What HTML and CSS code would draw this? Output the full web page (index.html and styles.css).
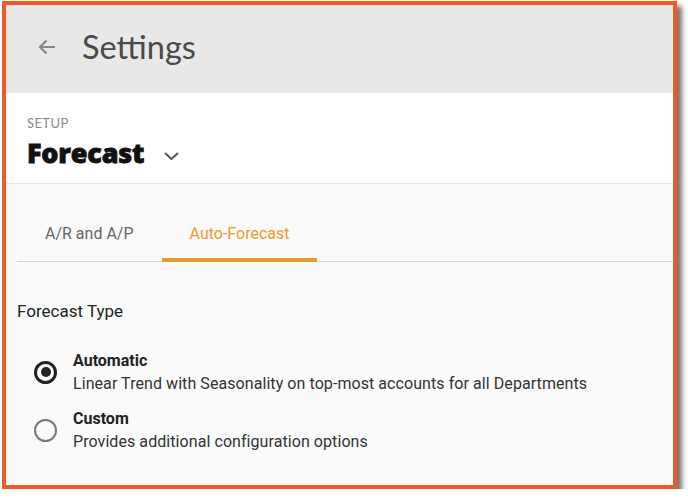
FILE: index.html
```html
<!DOCTYPE html>
<html lang="en">
<head>
    <meta charset="UTF-8">
    <title>Settings - Forecast</title>
    <link rel="stylesheet" href="styles.css">
</head>
<body>

<div class="frame">
    <header class="topbar">
        <svg class="back" width="20" height="20" viewBox="0 0 20 20">
            <path d="M18 10H3M9.5 3.5L3 10l6.5 6.5" fill="none" stroke="#8a8a8a" stroke-width="2.2"/>
        </svg>
        <h1>Settings</h1>
    </header>

    <section class="setup">
        <div class="eyebrow">SETUP</div>
        <div class="title-row">
            <h2>Forecast</h2>
            <svg class="chevron" width="15" height="8" viewBox="0 0 15 8">
                <path d="M1 1l6.5 6 6.5-6" fill="none" stroke="#555" stroke-width="2"/>
            </svg>
        </div>
    </section>

    <main class="content">
        <nav class="tabs">
            <div class="tab">A/R and A/P</div>
            <div class="tab active">Auto-Forecast</div>
        </nav>

        <h3>Forecast Type</h3>

        <div class="option">
            <span class="radio checked"></span>
            <div>
                <div class="opt-name">Automatic</div>
                <div class="opt-desc">Linear Trend with Seasonality on top-most accounts for all Departments</div>
            </div>
        </div>
        <div class="option">
            <span class="radio"></span>
            <div>
                <div class="opt-name">Custom</div>
                <div class="opt-desc">Provides additional configuration options</div>
            </div>
        </div>
    </main>
</div>

</body>
</html>
```

FILE: styles.css
```css
body {
    margin: 0;
    background-color: #fff;
    font-family: Roboto, Arial, sans-serif;
    color: #333;
}
.frame {
    margin: 1px 0 0 2px;
    width: 667px;
    height: 480px;
    border: 4px solid #f05a28;
    background-color: #fafafa;
    box-shadow: 5px 5px 5px rgba(0, 0, 0, 0.55);
    overflow: hidden;
}
.topbar {
    height: 88px;
    background-color: #e8e8e8;
    display: flex;
    align-items: center;
    padding-left: 31px;
}
.back {
    margin-top: -4px;
}
.topbar h1 {
    margin: -6px 0 0 25px;
    font-family: Lato, "Open Sans", sans-serif;
    font-weight: 400;
    font-size: 32.5px;
    color: #4a4a4a;
}
.setup {
    height: 91px;
    background-color: #fff;
    border-bottom: 1px solid #e6e6e6;
    padding-left: 21px;
    box-sizing: border-box;
    padding-top: 22px;
}
.eyebrow {
    font-family: Lato, sans-serif;
    font-size: 13px;
    line-height: 16px;
    color: #8a8a8a;
    letter-spacing: 0.4px;
}
.title-row {
    display: flex;
    align-items: center;
    margin-top: 6px;
}
.title-row h2 {
    margin: 0;
    font-family: "Open Sans", Lato, sans-serif;
    font-weight: 800;
    font-size: 27px;
    line-height: 32px;
    letter-spacing: -0.2px;
    -webkit-text-stroke: 0.8px #111;
    color: #111;
}
.chevron {
    margin-left: 20px;
    margin-top: 5px;
}
.content {
    padding-left: 11px;
}
.tabs {
    display: flex;
    margin-top: 27px;
    border-bottom: 1px solid #d6d6d6;
}
.tab {
    padding: 13px 28px 14px;
    font-size: 16px;
    line-height: 20px;
    color: #666;
    border-bottom: 4px solid transparent;
    margin-bottom: -1px;
}
.tab.active {
    color: #e99b2b;
    border-bottom-color: #e99b2b;
}
.content h3 {
    margin: 39px 0 0;
    font-size: 17px;
    line-height: 20px;
    font-weight: 400;
    color: #222;
}
.option {
    display: flex;
    align-items: center;
    margin: 28px 0 0 17px;
}
.option + .option {
    margin-top: 12px;
}
.radio {
    box-sizing: border-box;
    width: 23px;
    height: 23px;
    border: 2px solid #777;
    border-radius: 50%;
    margin-right: 16px;
    display: flex;
    align-items: center;
    justify-content: center;
    flex-shrink: 0;
}
.radio.checked {
    border: 3px solid #222;
}
.radio.checked::after {
    content: "";
    width: 10px;
    height: 10px;
    border-radius: 50%;
    background-color: #222;
}
.opt-name {
    font-size: 16px;
    font-weight: 700;
    line-height: 23px;
    color: #222;
}
.opt-desc {
    font-size: 16px;
    line-height: 23px;
    letter-spacing: 0.07px;
    color: #333;
}
```
